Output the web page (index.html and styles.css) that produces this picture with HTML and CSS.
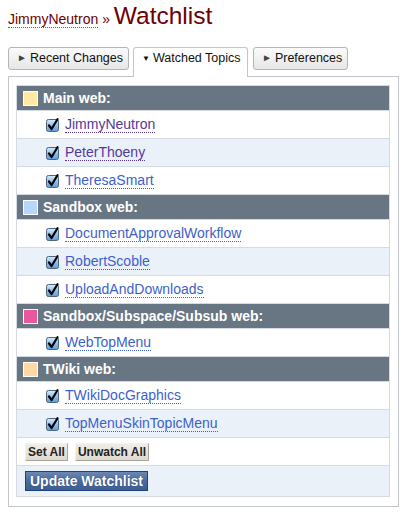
FILE: index.html
```html
<!DOCTYPE html>
<html>
<head>
<meta charset="utf-8">
<link rel="stylesheet" href="styles.css">
</head>
<body>
<svg class="defs" width="0" height="0">
  <defs>
    <linearGradient id="cbg" x1="0" y1="0" x2="0" y2="1">
      <stop offset="0" stop-color="#d8ecfb"/>
      <stop offset="0.5" stop-color="#8fc1ec"/>
      <stop offset="1" stop-color="#5c9ee0"/>
    </linearGradient>
    <symbol id="cb" viewBox="0 0 13 14">
      <rect x="0.5" y="1.5" width="12" height="12" rx="2" fill="url(#cbg)" stroke="#4a6482"/>
      <path d="M3 7.5 L5.6 11 L11.5 1.2" fill="none" stroke="#000" stroke-width="2.2" stroke-linecap="round" stroke-linejoin="round"/>
    </symbol>
  </defs>
</svg>
<h1 class="title"><a class="crumb" href="#">JimmyNeutron</a> » <span class="big">Watchlist</span></h1>

<div class="tabs">
  <div class="tab t1"><span class="arr">►</span>Recent Changes</div>
  <div class="tab active"><span class="arr down">▼</span>Watched Topics</div>
  <div class="tab t3"><span class="arr">►</span>Preferences</div>
</div>

<div class="panel">
  <div class="wtable">
    <div class="hdr"><span class="sw main"></span>Main web:</div>
    <div class="row"><svg class="cbx"><use href="#cb"/></svg><a class="lnk visited" href="#">JimmyNeutron</a></div>
    <div class="row alt"><svg class="cbx"><use href="#cb"/></svg><a class="lnk visited" href="#">PeterThoeny</a></div>
    <div class="row"><svg class="cbx"><use href="#cb"/></svg><a class="lnk" href="#">TheresaSmart</a></div>

    <div class="hdr"><span class="sw sandbox"></span>Sandbox web:</div>
    <div class="row"><svg class="cbx"><use href="#cb"/></svg><a class="lnk" href="#">DocumentApprovalWorkflow</a></div>
    <div class="row alt"><svg class="cbx"><use href="#cb"/></svg><a class="lnk" href="#">RobertScoble</a></div>
    <div class="row"><svg class="cbx"><use href="#cb"/></svg><a class="lnk" href="#">UploadAndDownloads</a></div>

    <div class="hdr"><span class="sw subsub"></span>Sandbox/Subspace/Subsub web:</div>
    <div class="row"><svg class="cbx"><use href="#cb"/></svg><a class="lnk" href="#">WebTopMenu</a></div>

    <div class="hdr"><span class="sw twiki"></span>TWiki web:</div>
    <div class="row"><svg class="cbx"><use href="#cb"/></svg><a class="lnk" href="#">TWikiDocGraphics</a></div>
    <div class="row alt"><svg class="cbx"><use href="#cb"/></svg><a class="lnk" href="#">TopMenuSkinTopicMenu</a></div>

    <div class="row btnrow"><button class="btn">Set All</button><button class="btn">Unwatch All</button></div>
    <div class="row alt subrow"><button class="submit">Update Watchlist</button></div>
  </div>
</div>
</body>
</html>
```

FILE: styles.css
```css
html, body {
  background: #ffffff;
}
body {
  margin: 0 8px;
  font-family: "Liberation Sans", Arial, Helvetica, sans-serif;
  color: #222;
}
.defs {
  position: absolute;
  width: 0;
  height: 0;
}
.title {
  margin: 0;
  padding-top: 2px;
  font-size: 14px;
  font-weight: normal;
  color: #6d0000;
  line-height: 28px;
  height: 30px;
}
.crumb {
  color: #6d0000;
  text-decoration: none;
  border-bottom: 1px dotted #5a5aa8;
}
.big {
  font-size: 24.5px;
}
.tabs {
  display: flex;
  align-items: flex-start;
  gap: 4px;
  margin-top: 15px;
  position: relative;
  z-index: 1;
}
.tab {
  box-sizing: border-box;
  height: 23px;
  line-height: 21px;
  padding: 0 0 0 8px;
  font-size: 12.5px;
  color: #111;
  white-space: nowrap;
  border: 1px solid #b4b4b4;
  border-radius: 3px;
  background: linear-gradient(#fbfbfb, #e6e6e6);
}
.tab.t1 {
  width: 121px;
}
.tab.t3 {
  width: 95px;
  margin-left: 1px;
}
.tab.active {
  width: 115px;
  height: 30px;
  background: #fff;
  border-color: #c4c4cc;
  border-bottom: none;
  border-radius: 3px 3px 0 0;
  padding-left: 8px;
}
.arr {
  font-size: 10px;
  color: #444;
  margin-right: 3px;
  position: relative;
  top: -1px;
}
.arr.down {
  font-size: 8px;
  color: #111;
}
.panel {
  border: 1px solid #c4c4cc;
  margin-top: -1px;
  padding: 8px 8px 9px 7px;
}
.wtable {
  border: 1px solid #d6dae2;
  border-bottom: none;
}
.hdr {
  height: 24px;
  display: flex;
  align-items: center;
  padding-left: 6px;
  background: #687582;
  color: #fff;
  font-weight: bold;
  font-size: 14px;
  border-bottom: 1px solid #d6dae2;
}
.sw {
  width: 13px;
  height: 13px;
  border: 1px solid #fff;
  margin-right: 5px;
}
.sw.main { background: #ffe9a6; }
.sw.sandbox { background: #b7d6fb; }
.sw.subsub { background: #e7589f; }
.sw.twiki { background: #ffd8a4; }
.row {
  height: 27px;
  display: flex;
  align-items: center;
  padding-left: 29px;
  background: #fff;
  border-bottom: 1px solid #d6dae2;
}
.row.alt {
  background: #eaf1f9;
}
.cbx {
  width: 13px;
  height: 14px;
  margin-right: 6px;
  flex: none;
}
.lnk {
  font-size: 14px;
  color: #3d5fcc;
  text-decoration: none;
  border-bottom: 1px dotted #3d5fcc;
  line-height: 15px;
}
.lnk.visited {
  color: #54389a;
  border-bottom-color: #54389a;
}
.btnrow {
  padding-left: 8px;
  gap: 7px;
}
.btn {
  font-family: "Liberation Sans", Arial, sans-serif;
  font-weight: bold;
  font-size: 12px;
  color: #222;
  height: 18px;
  padding: 0 2px;
  border: 1px solid;
  border-color: #f4f2ee #a8a49c #a8a49c #f4f2ee;
  background: linear-gradient(#efede8, #dedad2);
  border-radius: 0;
}
.subrow {
  height: 30px;
  padding-left: 8px;
}
.submit {
  font-family: "Liberation Sans", Arial, sans-serif;
  font-weight: bold;
  font-size: 14px;
  color: #fff;
  height: 20px;
  width: 123px;
  padding: 0;
  border: 1px solid #1d3f88;
  background: linear-gradient(#6b88b4, #4a6b9c 50%, #3d5e90);
  border-radius: 0;
  text-shadow: 0 0 1px #1d3060;
}
```
